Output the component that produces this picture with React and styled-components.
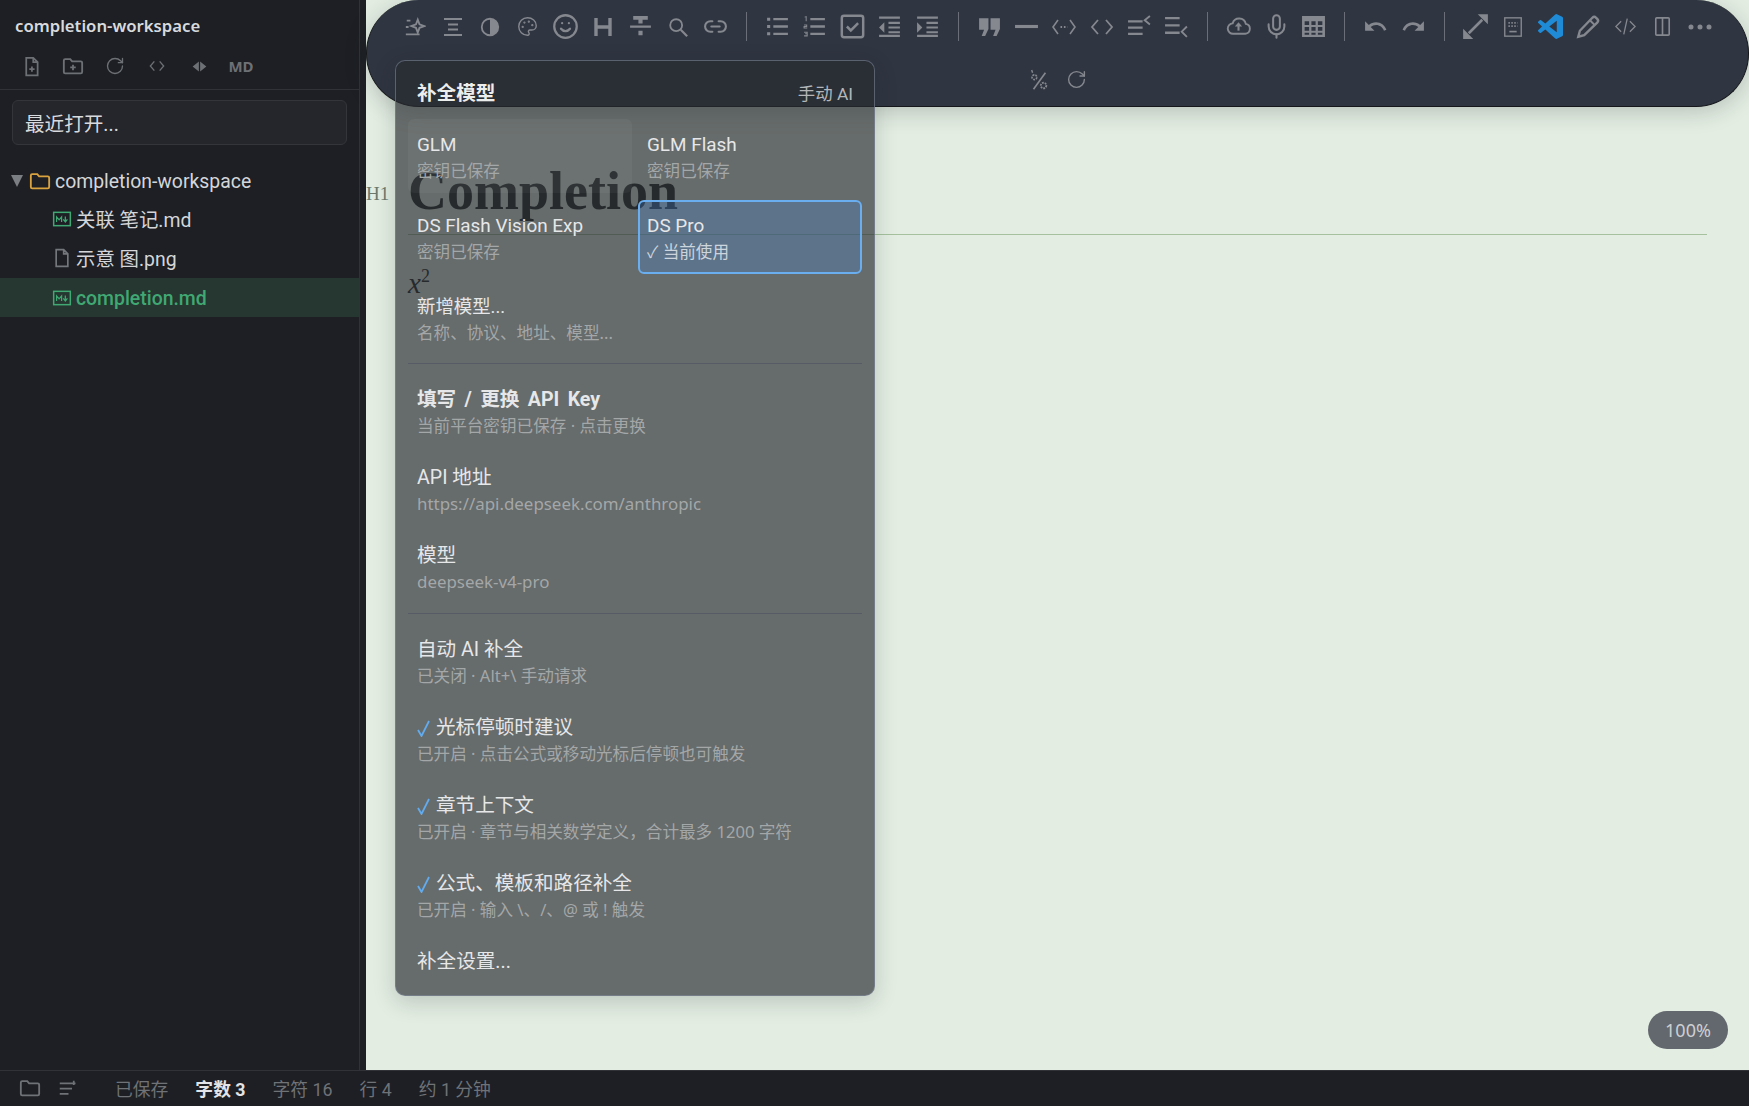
import { Fragment } from 'react';
import styled, { createGlobalStyle } from 'styled-components';
import { Palette, Smile, Link2, Mic, RotateCw } from 'lucide-react';

const UI_FONT = '"Noto Sans", "Noto Sans CJK SC", sans-serif';
const TEXT_FONT = 'Roboto, "Noto Sans CJK SC", sans-serif';

const GlobalStyle = createGlobalStyle`
  html, body {
    margin: 0;
    height: 100%;
    overflow: hidden;
    background: #1d1f24;
  }
  #root {
    height: 100vh;
  }
`;

const Page = styled.div`
  height: 100vh;
  display: flex;
  flex-direction: column;
  font-family: ${UI_FONT};
`;

const Main = styled.div`
  flex: 1;
  min-height: 0;
  display: flex;
`;

const Sidebar = styled.aside`
  width: 366px;
  flex: none;
  box-sizing: border-box;
  padding-right: 6px;
  background: #1d1f24;
`;

const SidebarInner = styled.div`
  height: 100%;
  border-right: 1px solid #303238;
`;

const SidebarTitle = styled.div`
  height: 50px;
  padding-left: 15px;
  display: flex;
  align-items: center;
  font-size: 16.7px;
  font-weight: 600;
  color: #d8dade;
`;

const SideActions = styled.div`
  height: 32px;
  padding: 0 0 7px 10px;
  display: flex;
  align-items: center;
  border-bottom: 1px solid #303238;
  color: #6d7075;
`;

const SideAction = styled.span`
  width: 42px;
  flex: none;
  display: flex;
  justify-content: center;
  font-size: 15px;
  font-weight: 700;
`;

const RecentBox = styled.div`
  margin: 10px 12px 16px;
  height: 45px;
  box-sizing: border-box;
  padding-left: 12px;
  display: flex;
  align-items: center;
  border: 1px solid #33353b;
  border-radius: 6px;
  background: #24262c;
  font-family: ${TEXT_FONT};
  font-size: 19.6px;
  color: #d8dade;
`;

const TreeRow = styled.div`
  height: 39px;
  box-sizing: border-box;
  padding-top: ${(p) => (p.$cjk ? 0 : 1)}px;
  padding-bottom: ${(p) => (p.$cjk ? 2 : 0)}px;
  display: flex;
  align-items: center;
  gap: 4px;
  padding-left: ${(p) => p.$indent}px;
  font-family: ${TEXT_FONT};
  font-size: 19.4px;
  color: ${(p) => (p.$active ? '#3fa873' : '#d4d6da')};
  font-weight: ${(p) => (p.$active ? 500 : 400)};
  background: ${(p) => (p.$active ? '#263630' : 'transparent')};
`;

const Caret = styled.span`
  width: 0;
  height: 0;
  margin-right: 2px;
  border-left: 6px solid transparent;
  border-right: 6px solid transparent;
  border-top: 12px solid #7b7e83;
`;

const Editor = styled.section`
  flex: 1;
  min-width: 0;
  position: relative;
  background: #e3ede2;
`;

const Toolbar = styled.div`
  position: relative;
  z-index: 1;
  height: 107px;
  box-sizing: border-box;
  padding: 0 20px;
  display: flex;
  flex-wrap: wrap;
  justify-content: center;
  align-content: flex-start;
  border: 1px solid #15171b;
  border-top-width: 0;
  border-radius: 53px;
  background: #2f3541;
  box-shadow: 0 5px 22px rgba(30, 40, 40, 0.22);
  color: #85888e;
`;

const ToolButton = styled.span`
  width: 37.5px;
  height: 53px;
  display: flex;
  align-items: center;
  justify-content: center;
`;

const ToolDivider = styled.span`
  width: 24.5px;
  height: 53px;
  display: flex;
  align-items: center;
  justify-content: center;
  &::before {
    content: '';
    width: 1px;
    height: 29px;
    background: #6a6e76;
  }
`;

const Doc = styled.div`
  padding: 52px 42px 0;
  color: #232a2a;
`;

const DocTitle = styled.h1`
  position: relative;
  margin: 0;
  padding-bottom: 10px;
  border-bottom: 1px solid #a5c19d;
  font-family: 'Liberation Serif', serif;
  font-size: 54px;
  line-height: 65px;
  font-weight: 700;
`;

const HeadingMark = styled.span`
  position: absolute;
  left: -42px;
  top: 24px;
  font-size: 19px;
  line-height: 22px;
  font-weight: 400;
  color: #6b7a6c;
`;

const Formula = styled.div`
  margin-top: 30px;
  font-family: 'Liberation Serif', serif;
  font-style: italic;
  font-size: 29px;
  line-height: 36px;
  sup {
    font-style: normal;
    font-size: 18px;
    line-height: 0;
    vertical-align: 11px;
  }
`;

const Menu = styled.div`
  position: absolute;
  z-index: 2;
  left: 29px;
  top: 60px;
  width: 480px;
  box-sizing: border-box;
  padding: 12px;
  display: flex;
  flex-direction: column;
  gap: 10px;
  border: 1px solid rgba(130, 138, 160, 0.55);
  border-radius: 10px;
  background: rgba(40, 43, 48, 0.67);
  box-shadow: 0 6px 22px rgba(30, 40, 40, 0.2);
  font-family: ${TEXT_FONT};
`;

const MenuHeader = styled.div`
  padding: 8px 9px 2px;
  display: flex;
  align-items: center;
  justify-content: space-between;
  line-height: 26px;
`;

const MenuHeading = styled.span`
  font-size: 19.6px;
  font-weight: 700;
  color: #eceded;
`;

const MenuMode = styled.span`
  font-size: 17.4px;
  color: #b4b6b8;
`;

const ModelGrid = styled.div`
  margin-bottom: 1px;
  display: grid;
  grid-template-columns: 224px 224px;
  gap: 7px 6px;
`;

const ModelTile = styled.div`
  height: 74px;
  box-sizing: border-box;
  padding: 10px 7px;
  border: 2px solid ${(p) => (p.$selected ? '#6aaef0' : 'transparent')};
  border-radius: 6px;
  background: ${(p) =>
    p.$selected ? 'rgba(70, 140, 225, 0.26)' : p.$hover ? 'rgba(255, 255, 255, 0.045)' : 'transparent'};
`;

const MenuItem = styled.div`
  padding: 8px 9px;
`;

const ItemTitle = styled.div`
  padding-top: 1px;
  font-size: ${(p) => p.$size || 19.6}px;
  line-height: 26px;
  font-weight: ${(p) => (p.$bold ? 700 : 400)};
  word-spacing: ${(p) => (p.$bold ? 3.5 : 0)}px;
  color: #e6e7e8;
`;

const ItemNote = styled.div`
  margin-top: 1px;
  font-family: ${UI_FONT};
  font-size: ${(p) => (p.$latin ? 16.9 : 16.6)}px;
  line-height: 24px;
  color: ${(p) => (p.$bright ? '#ccd5de' : '#a4a7a8')};
`;

const CheckMark = styled.svg`
  display: inline-block;
  width: 13px;
  height: 17px;
  margin-right: 6px;
  vertical-align: -3px;
  fill: none;
  stroke: #62abee;
  stroke-width: 1.8;
`;

const MenuDivider = styled.div`
  height: 1px;
  margin-top: ${(p) => p.$nudge || 0}px;
  margin-bottom: 4px;
  background: #565b66;
`;

const ZoomBadge = styled.div`
  position: absolute;
  right: 21px;
  bottom: 21px;
  width: 80px;
  height: 38px;
  display: flex;
  align-items: center;
  justify-content: center;
  border-radius: 19px;
  background: #63676e;
  font-size: 18px;
  color: #cdcfd2;
`;

const StatusBar = styled.footer`
  height: 36px;
  flex: none;
  box-sizing: border-box;
  padding: 0 0 1px 19px;
  display: flex;
  align-items: center;
  border-top: 1px solid #303238;
  background: #1d1f24;
  color: #6f7277;
  font-family: ${TEXT_FONT};
`;

const StatusIcons = styled.div`
  width: 96px;
  display: flex;
  align-items: center;
  gap: 17px;
`;

const StatusText = styled.span`
  margin-right: 27px;
  font-size: 17.8px;
  font-weight: ${(p) => (p.$strong ? 700 : 400)};
  color: ${(p) => (p.$strong ? '#e2e4e7' : 'inherit')};
`;

const Glyph = styled.svg`
  display: block;
  flex: none;
  fill: none;
  stroke: currentColor;
  stroke-width: 2;
  color: ${(p) => p.$tint || 'inherit'};
`;

function Ic({ size = 22, tint, children, ...rest }) {
  return (
    <Glyph width={size} height={size} viewBox="0 0 24 24" $tint={tint} {...rest}>
      {children}
    </Glyph>
  );
}

const Solid = styled.path`
  fill: currentColor;
  stroke: none;
`;

const toolGroups = [
  [
    <Ic><path d="M15 4l1.9 5.1L22 11l-5.1 1.9L15 18l-1.9-5.1L8 11l5.1-1.9z" /><path d="M3 5h4M2 12h3M2 20h15" /></Ic>,
    <Ic size={24}><path d="M3 4h18M7 9.5h10M7 14.5h10M3 20h18" /></Ic>,
    <Ic><circle cx="12" cy="12" r="9" /><Solid d="M12 3a9 9 0 0 1 0 18z" /></Ic>,
    <Palette size={21} strokeWidth={1.6} />,
    <Smile size={27} strokeWidth={2} />,
    <Ic size={24}><path strokeWidth="3.4" d="M5 3v18M19 3v18M5 12h14" /></Ic>,
    <Ic size={25}><Solid d="M5 2h14v3.5h-5V9h-4V5.5H5zM2 11h20v2.2H2zM10 16h4v4.5h-4z" /></Ic>,
    <Ic size={22}><circle cx="10" cy="10" r="6.5" /><path strokeWidth="2.4" d="M15 15l7 7" /></Ic>,
    <Link2 size={25} strokeWidth={2} />,
  ],
  [
    <Ic size={25}><path strokeWidth="2.2" d="M8 5h14M8 12h14M8 19h14" /><Solid d="M2 3.5h3v3H2zM2 10.5h3v3H2zM2 17.5h3v3H2z" /></Ic>,
    <Ic size={25}><path strokeWidth="2.2" d="M8 5h14M8 12h14M8 19h14" /><path strokeWidth="1" d="M2.5 3L4 2.5V7M2 10.5h2.5V12H2v1.5h3M2 17.5h3V19H3h2v2H2" /></Ic>,
    <Ic size={27}><rect x="2.5" y="2.5" width="19" height="19" rx="2" strokeWidth="2.2" /><path strokeWidth="2.2" d="M7 12l3.5 3.5L17 9" /></Ic>,
    <Ic size={25}><path d="M2 3.5h20M11 8.5h11M11 13h11M11 17.5h11M2 21h20" /><Solid d="M7 8v10l-5-5z" /></Ic>,
    <Ic size={25}><path d="M2 3.5h20M11 8.5h11M11 13h11M11 17.5h11M2 21h20" /><Solid d="M2 8v10l5-5z" /></Ic>,
  ],
  [
    <Ic size={25}><Solid d="M2 4h9v10.5L7.8 21H4.5l2.3-6H2zM13 4h9v10.5L18.8 21h-3.3l2.3-6H13z" /></Ic>,
    <Ic size={25}><path strokeWidth="3" d="M1 12h22" /></Ic>,
    <Ic size={24}><path strokeWidth="1.6" d="M6 5l-5 7 5 7M18 5l5 7-5 7" /><path strokeWidth="2" strokeDasharray="1.6 1.8" d="M8.5 12h7" /></Ic>,
    <Ic size={24}><path strokeWidth="1.8" d="M8 5l-6 7 6 7M16 5l6 7-6 7" /></Ic>,
    <Ic size={25}><path strokeWidth="2.2" d="M1 7h14M1 13h14M1 19h14" /><path strokeWidth="1.8" d="M22 2l-5 4 5 4" /></Ic>,
    <Ic size={25}><path strokeWidth="2.2" d="M1 4h14M1 11h14M1 18h14" /><path strokeWidth="1.8" d="M22 12l-5 5 5 5" /></Ic>,
  ],
  [
    <Ic size={25}><path strokeWidth="1.8" d="M7 19a5 5 0 0 1-.6-10A6.5 6.5 0 0 1 19 9.5 4.8 4.8 0 0 1 18.5 19z" /><path strokeWidth="2" d="M12 16v-5" /><Solid d="M12 8l3.5 4h-7z" /></Ic>,
    <Mic size={27} strokeWidth={1.8} />,
    <Ic size={25}><Solid fillRule="evenodd" d="M1 2h22v20H1zM3.5 7v3.5h4.3V7zM10 7v3.5h4V7zM16.2 7v3.5h4.3V7zM3.5 12.5V16h4.3v-3.5zM10 12.5V16h4v-3.5zM16.2 12.5V16h4.3v-3.5zM3.5 18v2h4.3v-2zM10 18v2h4v-2zM16.2 18v2h4.3v-2z" /></Ic>,
  ],
  [
    <Ic size={25}><Solid d="M12.5 8c-2.65 0-5.05.99-6.9 2.6L2 7v9h9l-3.62-3.62c1.39-1.16 3.16-1.88 5.12-1.88 3.54 0 6.55 2.31 7.6 5.5l2.37-.78C21.08 11.03 17.15 8 12.5 8z" /></Ic>,
    <Ic size={25}><Solid d="M18.4 10.6C16.55 8.99 14.15 8 11.5 8c-4.65 0-8.58 3.03-9.96 7.22L3.9 16c1.05-3.19 4.05-5.5 7.6-5.5 1.95 0 3.73.72 5.12 1.88L13 16h9V7l-3.6 3.6z" /></Ic>,
  ],
  [
    <Ic size={27}><path strokeWidth="2.4" d="M6 18L18 6" /><Solid d="M14 1h9v9zM1 14v9h9z" /></Ic>,
    <Ic size={22}><rect x="3" y="2" width="18" height="20" strokeWidth="1.5" /><path strokeWidth="1.8" d="M8 17h8" /><path strokeWidth="1.8" strokeDasharray="1.6 1.6" d="M7 7.5h10M7 11h10" /></Ic>,
    <Ic size={25} tint="#1f8ad6"><Solid d="M23.15 2.587L18.21.21a1.494 1.494 0 0 0-1.705.29l-9.46 8.63-4.12-3.128a.999.999 0 0 0-1.276.057L.327 7.261A1 1 0 0 0 .326 8.74L3.899 12 .326 15.26a1 1 0 0 0 .001 1.479L1.65 17.94a.999.999 0 0 0 1.276.057l4.12-3.128 9.46 8.63a1.492 1.492 0 0 0 1.704.29l4.942-2.377A1.5 1.5 0 0 0 24 20.06V3.939a1.5 1.5 0 0 0-.85-1.352zm-5.146 14.861L10.826 12l7.178-5.448v10.896z" /></Ic>,
    <Ic size={26}><path strokeWidth="2.2" d="M3 21l1.5-5.5L16 3.5a2.5 2.5 0 0 1 3.5 0l1 1a2.5 2.5 0 0 1 0 3.5L8.5 19.5z" /><path strokeWidth="1.8" d="M14 6l4.5 4.5" /></Ic>,
    <Ic size={21}><path strokeWidth="1.5" d="M7 6l-6 6 6 6M17 6l6 6-6 6M14 3l-4 18" /></Ic>,
    <Ic size={23}><path strokeWidth="1.7" d="M6 3h12a1 1 0 0 1 1 1v16a1 1 0 0 1-1 1H6a1 1 0 0 1-1-1V4a1 1 0 0 1 1-1zM12 3v18" /></Ic>,
    <Ic size={24}><Solid d="M3 9.5a2.5 2.5 0 1 0 0 5 2.5 2.5 0 0 0 0-5zM12 9.5a2.5 2.5 0 1 0 0 5 2.5 2.5 0 0 0 0-5zM21 9.5a2.5 2.5 0 1 0 0 5 2.5 2.5 0 0 0 0-5z" /></Ic>,
  ],
  [
    <Ic size={22}><path strokeWidth="1.8" d="M19 4L6 22" /><circle cx="7" cy="9" r="2.6" strokeWidth="1.8" strokeDasharray="2 1" /><circle cx="17" cy="18" r="3" strokeWidth="2" strokeDasharray="2 1" /><path strokeWidth="1.5" d="M4 1l1 3" /></Ic>,
    <RotateCw size={21} strokeWidth={1.6} />,
  ],
];

const folderPath = 'M2 6a1.5 1.5 0 0 1 1.5-1.5H9L11 7h9.5A1.5 1.5 0 0 1 22 8.5v10a1.5 1.5 0 0 1-1.5 1.5h-17A1.5 1.5 0 0 1 2 18.5z';

const MdIcon = ({ tint }) => (
  <Ic size={20} tint={tint}>
    <rect x="2" y="4" width="20" height="16" strokeWidth="1.8" />
    <path strokeWidth="1.5" d="M5.5 15.5v-6l3 3.5 3-3.5v6M16 9v6M13.5 12.5L16 15.5l2.5-3" />
  </Ic>
);

const models = [
  { id: 'glm', name: 'GLM', note: '密钥已保存', hover: true },
  { id: 'flash', name: 'GLM Flash', note: '密钥已保存' },
  { id: 'vision', name: 'DS Flash Vision Exp', note: '密钥已保存' },
  { id: 'pro', name: 'DS Pro', note: '✓ 当前使用', selected: true },
];

const connectRows = [
  { title: '填写 / 更换 API Key', note: '当前平台密钥已保存 · 点击更换', bold: true },
  { title: 'API 地址', note: 'https://api.deepseek.com/anthropic', latin: true },
  { title: '模型', note: 'deepseek-v4-pro', latin: true },
];

const optionRows = [
  { title: '自动 AI 补全', note: '已关闭 · Alt+\\ 手动请求' },
  { title: '光标停顿时建议', note: '已开启 · 点击公式或移动光标后停顿也可触发', checked: true },
  { title: '章节上下文', note: '已开启 · 章节与相关数学定义，合计最多 1200 字符', checked: true },
  { title: '公式、模板和路径补全', note: '已开启 · 输入 \\、/、@ 或 ! 触发', checked: true },
  { title: '补全设置...' },
];

function Row({ title, note, bold, size, latin, checked }) {
  return (
    <MenuItem>
      <ItemTitle $bold={bold} $size={size}>
        {checked && (
          <CheckMark viewBox="0 0 13 17">
            <path d="M1 10l3.5 6L12 1" />
          </CheckMark>
        )}
        {title}
      </ItemTitle>
      {note && <ItemNote $latin={latin}>{note}</ItemNote>}
    </MenuItem>
  );
}

function App() {
  return (
    <Page>
      <GlobalStyle />
      <Main>
        <Sidebar>
          <SidebarInner>
            <SidebarTitle>completion-workspace</SidebarTitle>
            <SideActions>
              <SideAction><Ic size={21} strokeWidth={1.8}><path d="M6 2h8l5 5v15H6zM14 2v5h5M12.5 12v6M9.5 15h6" /></Ic></SideAction>
              <SideAction><Ic size={22} strokeWidth={1.8}><path d={folderPath} /><path d="M12 10.5v6M9 13.5h6" /></Ic></SideAction>
              <SideAction><RotateCw size={20} strokeWidth={1.6} /></SideAction>
              <SideAction><Ic size={16}><path d="M8 5l-6 7 6 7M16 5l6 7-6 7" /></Ic></SideAction>
              <SideAction><Ic size={15}><Solid d="M11 4L1 12l10 8zM13 4l10 8-10 8z" /></Ic></SideAction>
              <SideAction>MD</SideAction>
            </SideActions>
            <RecentBox>最近打开...</RecentBox>
            <TreeRow $indent={11}>
              <Caret />
              <Ic size={22} strokeWidth={1.5} tint="#d9a23f"><path d={folderPath} /></Ic>
              completion-workspace
            </TreeRow>
            <TreeRow $indent={52} $cjk>
              <MdIcon tint="#3fa873" />
              关联 笔记.md
            </TreeRow>
            <TreeRow $indent={52} $cjk>
              <Ic size={20} strokeWidth={1.5} tint="#74777c"><path d="M5 2h9l5 5v15H5zM14 2v5h5" /></Ic>
              示意 图.png
            </TreeRow>
            <TreeRow $indent={52} $active>
              <MdIcon />
              completion.md
            </TreeRow>
          </SidebarInner>
        </Sidebar>
        <Editor>
          <Toolbar>
            {toolGroups.map((group, g) => (
              <Fragment key={g}>
                {g > 0 && g < toolGroups.length - 1 && <ToolDivider />}
                {group.map((icon, i) => (
                  <ToolButton key={i}>{icon}</ToolButton>
                ))}
              </Fragment>
            ))}
          </Toolbar>
          <Doc>
            <DocTitle>
              <HeadingMark>H1</HeadingMark>
              Completion
            </DocTitle>
            <Formula>x<sup>2</sup></Formula>
          </Doc>
          <Menu>
            <MenuHeader>
              <MenuHeading>补全模型</MenuHeading>
              <MenuMode>手动 AI</MenuMode>
            </MenuHeader>
            <ModelGrid>
              {models.map((m) => (
                <ModelTile key={m.id} $hover={m.hover} $selected={m.selected}>
                  <ItemTitle $size={18.9}>{m.name}</ItemTitle>
                  <ItemNote $bright={m.selected}>{m.note}</ItemNote>
                </ModelTile>
              ))}
            </ModelGrid>
            <Row title="新增模型..." note="名称、协议、地址、模型..." size={18.4} />
            <MenuDivider />
            {connectRows.map((r) => (
              <Row key={r.title} {...r} />
            ))}
            <MenuDivider $nudge={1} />
            {optionRows.map((r) => (
              <Row key={r.title} {...r} />
            ))}
          </Menu>
          <ZoomBadge>100%</ZoomBadge>
        </Editor>
      </Main>
      <StatusBar>
        <StatusIcons>
          <Ic size={22} strokeWidth={1.8}><path d={folderPath} /></Ic>
          <Ic size={21} strokeWidth={1.8}><path d="M2 6h18M2 12h14M2 18h10M18 3v5" /></Ic>
        </StatusIcons>
        <StatusText>已保存</StatusText>
        <StatusText $strong>字数 3</StatusText>
        <StatusText>字符 16</StatusText>
        <StatusText>行 4</StatusText>
        <StatusText>约 1 分钟</StatusText>
      </StatusBar>
    </Page>
  );
}

export default App;
